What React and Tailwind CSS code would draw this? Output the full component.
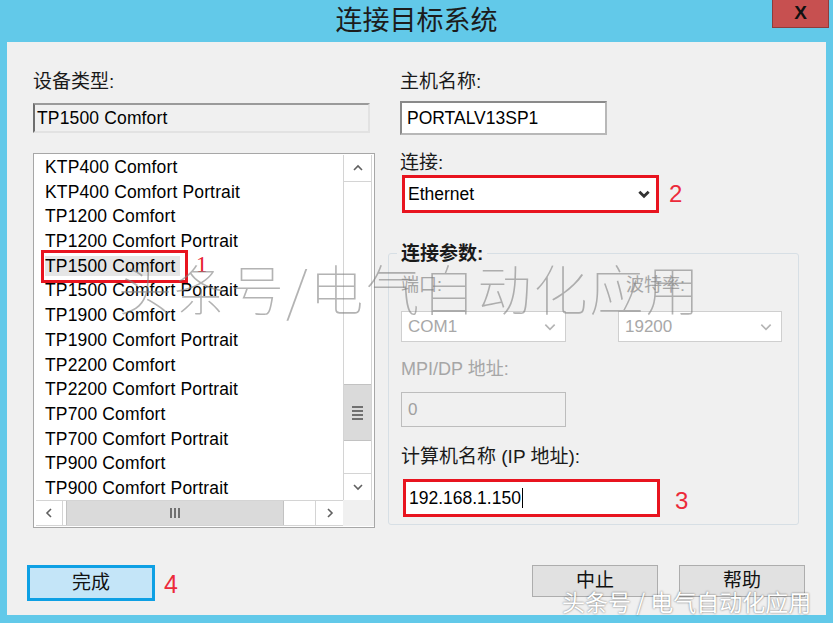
import React from 'react';

const devices = [
  'KTP400 Comfort',
  'KTP400 Comfort Portrait',
  'TP1200 Comfort',
  'TP1200 Comfort Portrait',
  'TP1500 Comfort',
  'TP1500 Comfort Portrait',
  'TP1900 Comfort',
  'TP1900 Comfort Portrait',
  'TP2200 Comfort',
  'TP2200 Comfort Portrait',
  'TP700 Comfort',
  'TP700 Comfort Portrait',
  'TP900 Comfort',
  'TP900 Comfort Portrait',
];

// small chevron used by scrollbars and combo boxes
function Chevron({ dir = 'down', color = '#606060', size = 12, stroke = 1.6 }) {
  const pts = {
    up: '2,8 6,4 10,8',
    down: '2,4 6,8 10,4',
    left: '8,2 4,6 8,10',
    right: '4,2 8,6 4,10',
  }[dir];
  return (
    <svg width={size} height={size} viewBox="0 0 12 12">
      <polyline points={pts} fill="none" stroke={color} strokeWidth={stroke} />
    </svg>
  );
}

function Combo({ value, disabled, className }) {
  return (
    <div
      className={`flex items-center justify-between bg-white border ${
        disabled ? 'border-[#cfcfcf] text-[#a8a8a8]' : 'border-[#7a7a7a] text-black'
      } ${className}`}
    >
      <span className="pl-[6px] text-[17px]">{value}</span>
      <span className="pr-[8px]">
        <Chevron dir="down" color={disabled ? '#b4b4b4' : '#3a3a3a'} size={14} stroke={disabled ? 1.4 : 2.2} />
      </span>
    </div>
  );
}

function DeviceList() {
  return (
    <div className="mt-[20px] w-[342px] h-[375px] border border-[#a7a7a7] bg-white flex flex-col">
      <div className="flex h-[346px]">
        <div className="flex-1 pt-[1px] overflow-hidden">
          {devices.map((d, i) => (
            <div key={d} className="relative h-[24.7px] leading-[24.7px] pl-[11px] text-[17.5px] tracking-[0.15px] text-black whitespace-nowrap">
              {i === 4 ? (
                <>
                  <span className="bg-[#e5e5e5] pr-[4px]">{d}</span>
                  <div className="absolute left-[7px] -top-[4px] w-[147px] h-[33px] border-[3px] border-[#e8141f]" />
                  <span className="absolute left-[162px] -top-[1px] text-[23px] text-[#e8202f] font-['Liberation_Serif',serif]">1</span>
                </>
              ) : (
                d
              )}
            </div>
          ))}
        </div>
        {/* vertical scrollbar */}
        <div className="w-[29px] mr-[2px] mt-[1px] border-x border-[#d4d4d4] flex flex-col">
          <div className="h-[27px] border-b border-[#d4d4d4] flex items-center justify-center">
            <Chevron dir="up" />
          </div>
          <div className="h-[202px]" />
          <div className="h-[57px] bg-[#dadada] border-y border-[#c2c2c2] flex items-center justify-center">
            <div className="flex flex-col gap-[2px]">
              <div className="w-[11px] h-[2px] bg-[#707070]" />
              <div className="w-[11px] h-[2px] bg-[#707070]" />
              <div className="w-[11px] h-[2px] bg-[#707070]" />
              <div className="w-[11px] h-[2px] bg-[#707070]" />
            </div>
          </div>
          <div className="flex-1" />
          <div className="h-[27px] border-t border-[#d4d4d4] flex items-center justify-center">
            <Chevron dir="down" />
          </div>
        </div>
      </div>
      {/* horizontal scrollbar */}
      <div className="flex h-[26px]">
        <div className="flex-1 flex border-y border-[#d4d4d4] ml-[2px]">
          <div className="w-[27px] border-r border-[#d4d4d4] flex items-center justify-center">
            <Chevron dir="left" />
          </div>
          <div className="w-[218px] ml-[3px] bg-[#dadada] border-x border-[#c2c2c2] flex items-center justify-center gap-[2px]">
            <div className="w-[2px] h-[10px] bg-[#707070]" />
            <div className="w-[2px] h-[10px] bg-[#707070]" />
            <div className="w-[2px] h-[10px] bg-[#707070]" />
          </div>
          <div className="flex-1" />
          <div className="w-[28px] border-l border-[#d4d4d4] flex items-center justify-center">
            <Chevron dir="right" />
          </div>
        </div>
        <div className="w-[31px] bg-[#f0f0f0]" />
      </div>
    </div>
  );
}

export default function App() {
  return (
    <div className="relative w-[833px] h-[623px] overflow-hidden bg-[#62c9e9] font-['Liberation_Sans','Noto_Sans_CJK_SC',sans-serif]">
      {/* title bar */}
      <div className="relative h-[42px] flex items-center justify-center pb-[4px]">
        <span className="text-[27px] leading-[32px] text-[#1c1c1c] font-['Noto_Sans_CJK_SC',sans-serif]">连接目标系统</span>
        <div className="absolute right-[4px] top-0 w-[57px] h-[28px] bg-[#c75050] border border-t-0 border-[#8e3c3c] flex items-center justify-center text-[19px] font-bold text-[#111]">
          X
        </div>
      </div>

      {/* client area */}
      <div className="mx-[7px] h-[573px] bg-[#f0f0f0] flex flex-col">
        <div className="flex pl-[26px] pt-[29px]">
          {/* left column */}
          <div className="w-[342px] flex flex-col">
            <div className="h-[22px] leading-[22px] text-[19px] text-[#1a1a1a]">设备类型:</div>
            <div className="mt-[10px] w-[337px] h-[30px] bg-[#f0f0f0] border-2 border-t-[#9a9a9a] border-l-[#6e6e6e] border-r-[#e2e2e2] border-b-[#e2e2e2] pl-[2px] leading-[26px] text-[17.5px] tracking-[0.15px] text-black">
              TP1500 Comfort
            </div>
            <DeviceList />
          </div>

          {/* right column */}
          <div className="ml-[13px] w-[411px] flex flex-col">
            <div className="pl-[12px]">
              <div className="h-[22px] leading-[22px] text-[19px] text-[#1a1a1a]">主机名称:</div>
              <div className="mt-[8px] w-[207px] h-[34px] bg-white border-2 border-t-[#8a8a8a] border-l-[#8a8a8a] border-r-[#b8b8b8] border-b-[#b8b8b8] pl-[5px] leading-[30px] text-[17.5px] text-black">
                PORTALV13SP1
              </div>
              <div className="mt-[17px] h-[22px] leading-[22px] text-[19px] text-[#1a1a1a]">连接:</div>
              <div className="mt-[1px] flex items-center">
                <div className="ml-[2px] w-[257px] h-[38px] border-[3px] border-[#e8141f] bg-white flex items-center justify-between">
                  <span className="pl-[3px] text-[17.5px] text-black">Ethernet</span>
                  <span className="pr-[5px]">
                    <Chevron dir="down" color="#333" size={14} stroke={2.4} />
                  </span>
                </div>
                <span className="ml-[10px] text-[24px] text-[#ec2a3a]">2</span>
              </div>
            </div>

            {/* group box */}
            <div className="relative mt-[40px] h-[272px] border border-[#d7dfe5] rounded-[3px] px-[12px]">
              <div className="absolute left-[8px] -top-[11px] bg-[#f0f0f0] px-[4px] h-[22px] leading-[22px] text-[19px] font-bold text-[#1a1a1a]">
                连接参数:
              </div>
              <div className="mt-[20px] flex h-[22px] leading-[22px] text-[18px] text-[#a6a6a6]">
                <span className="w-[225px]">端口:</span>
                <span>波特率:</span>
              </div>
              <div className="mt-[15px] flex">
                <Combo value="COM1" disabled className="w-[165px] h-[31px]" />
                <Combo value="19200" disabled className="ml-[52px] w-[164px] h-[31px]" />
              </div>
              <div className="mt-[16px] h-[22px] leading-[22px] text-[18px] text-[#a6a6a6]">MPI/DP 地址:</div>
              <div className="mt-[12px] w-[165px] h-[35px] bg-[#f0f0f0] border border-[#bdbdbd] pl-[6px] leading-[33px] text-[17px] text-[#a0a0a0]">
                0
              </div>
              <div className="mt-[19px] h-[22px] leading-[22px] text-[19px] text-[#1a1a1a]">计算机名称 (IP 地址):</div>
              <div className="mt-[9px] flex items-center">
                <div className="ml-[2px] w-[257px] h-[38px] border-[3px] border-[#e8141f] bg-white flex items-center pl-[3px] text-[17.5px] text-black">
                  192.168.1.150
                  <span className="ml-[1px] w-[1px] h-[20px] bg-black" />
                </div>
                <span className="ml-[15px] mt-[6px] text-[24px] text-[#ec2a3a]">3</span>
              </div>
            </div>
          </div>
        </div>

        {/* buttons */}
        <div className="mt-[37px] flex items-start pl-[20px]">
          <div className="w-[128px] h-[36px] border-[3px] border-[#0ea0e4] bg-[#c4e5f8] flex items-center justify-center text-[19px] text-[#111]">
            完成
          </div>
          <span className="ml-[9px] mt-[1px] text-[25px] text-[#ec2a3a]">4</span>
          <div className="ml-auto flex gap-[21px] pr-[21px]">
            <div className="w-[126px] h-[32px] border border-[#adadad] bg-[#e1e1e1] flex items-center justify-center text-[19px] text-[#111]">
              中止
            </div>
            <div className="w-[126px] h-[32px] border border-[#adadad] bg-[#e1e1e1] flex items-center justify-center text-[19px] text-[#111]">
              帮助
            </div>
          </div>
        </div>
      </div>

      {/* big watermark across the dialog */}
      <div className="absolute left-[118px] top-[258px] text-[54px] leading-[60px] tracking-[2px] font-thin text-[#808080]/60 whitespace-nowrap font-['Noto_Sans_CJK_SC',sans-serif] pointer-events-none">
        头条号/电气自动化应用
      </div>

      {/* corner watermark */}
      <div className="absolute left-[562px] top-[586px] text-[23px] leading-[30px] text-white whitespace-nowrap font-['Noto_Sans_CJK_SC',sans-serif] [text-shadow:0_0_2px_rgba(0,0,0,0.6)] pointer-events-none">
        头条号 / 电气自动化应用
      </div>
    </div>
  );
}
